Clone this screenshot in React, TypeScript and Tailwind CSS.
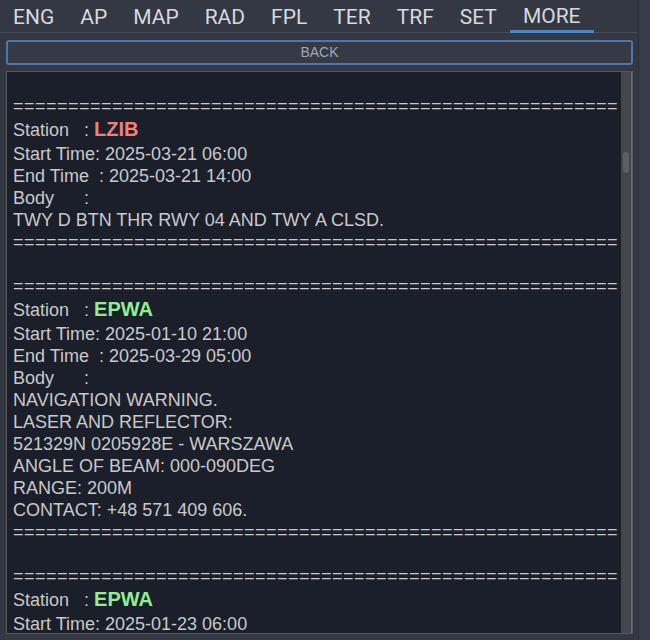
import React from "react";

type Notam = {
  station: string;
  color: string;
  start: string;
  end?: string;
  body: string[];
};

const tabs = ["ENG", "AP", "MAP", "RAD", "FPL", "TER", "TRF", "SET", "MORE"];

const notams: Notam[] = [
  {
    station: "LZIB",
    color: "text-[#f08080]",
    start: "2025-03-21 06:00",
    end: "2025-03-21 14:00",
    body: ["TWY D BTN THR RWY 04 AND TWY A CLSD."],
  },
  {
    station: "EPWA",
    color: "text-[#90ee90]",
    start: "2025-01-10 21:00",
    end: "2025-03-29 05:00",
    body: [
      "NAVIGATION WARNING.",
      "LASER AND REFLECTOR:",
      "521329N 0205928E - WARSZAWA",
      "ANGLE OF BEAM: 000-090DEG",
      "RANGE: 200M",
      "CONTACT: +48 571 409 606.",
    ],
  },
  {
    // only the top of this entry is in view
    station: "EPWA",
    color: "text-[#90ee90]",
    start: "2025-01-23 06:00",
    body: [],
  },
];

const rule = "=".repeat(55);

function Rule() {
  return <div className="h-[22px] leading-[22px] tracking-[0.49px] whitespace-pre">{rule}</div>;
}

function Line({ children }: { children?: React.ReactNode }) {
  return <div className="h-[22px] leading-[22px] whitespace-pre">{children}</div>;
}

export default function App() {
  return (
    <div className="w-[650px] h-[640px] bg-[#343843] flex overflow-hidden">
      <div className="w-[638px] flex flex-col">
        {/* Tabs */}
        <div className="h-[33px] flex items-stretch border-b border-[#464a55] font-['Roboto',sans-serif] text-[21px] text-[#d6d9de]">
          {tabs.map((t) => (
            <div
              key={t}
              className={
                t === "MORE"
                  ? "px-[13px] flex items-center border-b-[3px] border-[#4f86c6] -mb-px pt-[4px]"
                  : "px-[13px] flex items-center pt-[3px]"
              }
            >
              {t}
            </div>
          ))}
        </div>

        {/* Back */}
        <div className="mt-[7px] ml-[6px] w-[627px] h-[25px] border-2 border-[#4a78ae] rounded-[3px] bg-[#363a46] flex items-center justify-center font-['Liberation_Sans',sans-serif] text-[14px] text-[#a3a7ae]">
          BACK
        </div>

        {/* NOTAM list */}
        <div className="mt-[6px] ml-[6px] w-[627px] h-[563px] border border-[#55595f] bg-[#1b1f2a] flex overflow-hidden">
          <div className="flex-1 overflow-hidden pl-[6px] pt-[1px] font-['Liberation_Sans',Arial,sans-serif] text-[18px] text-[#c9c9c9]">
            {notams.map((n, i) => (
              <div key={i}>
                <Line />
                <Rule />
                <div className="h-[26px] leading-[24px] whitespace-pre">
                  {"Station   : "}
                  <span className={"font-bold text-[20px] " + n.color}>{n.station}</span>
                </div>
                <Line>{"Start Time: " + n.start}</Line>
                {n.end && (
                  <>
                    <Line>{"End Time  : " + n.end}</Line>
                    <Line>{"Body      :"}</Line>
                    {n.body.map((b) => (
                      <Line key={b}>{b}</Line>
                    ))}
                    <Rule />
                  </>
                )}
              </div>
            ))}
          </div>
          <div className="w-[11px] bg-[#43474a] border-r border-[#6a6e72] relative">
            <div className="absolute left-[2px] top-[80px] w-[6px] h-[21px] rounded-[3px] bg-[#5c6064]" />
          </div>
        </div>
      </div>
      <div className="flex-1 bg-[#383b4a] border-l border-[#2e313b]" />
    </div>
  );
}
